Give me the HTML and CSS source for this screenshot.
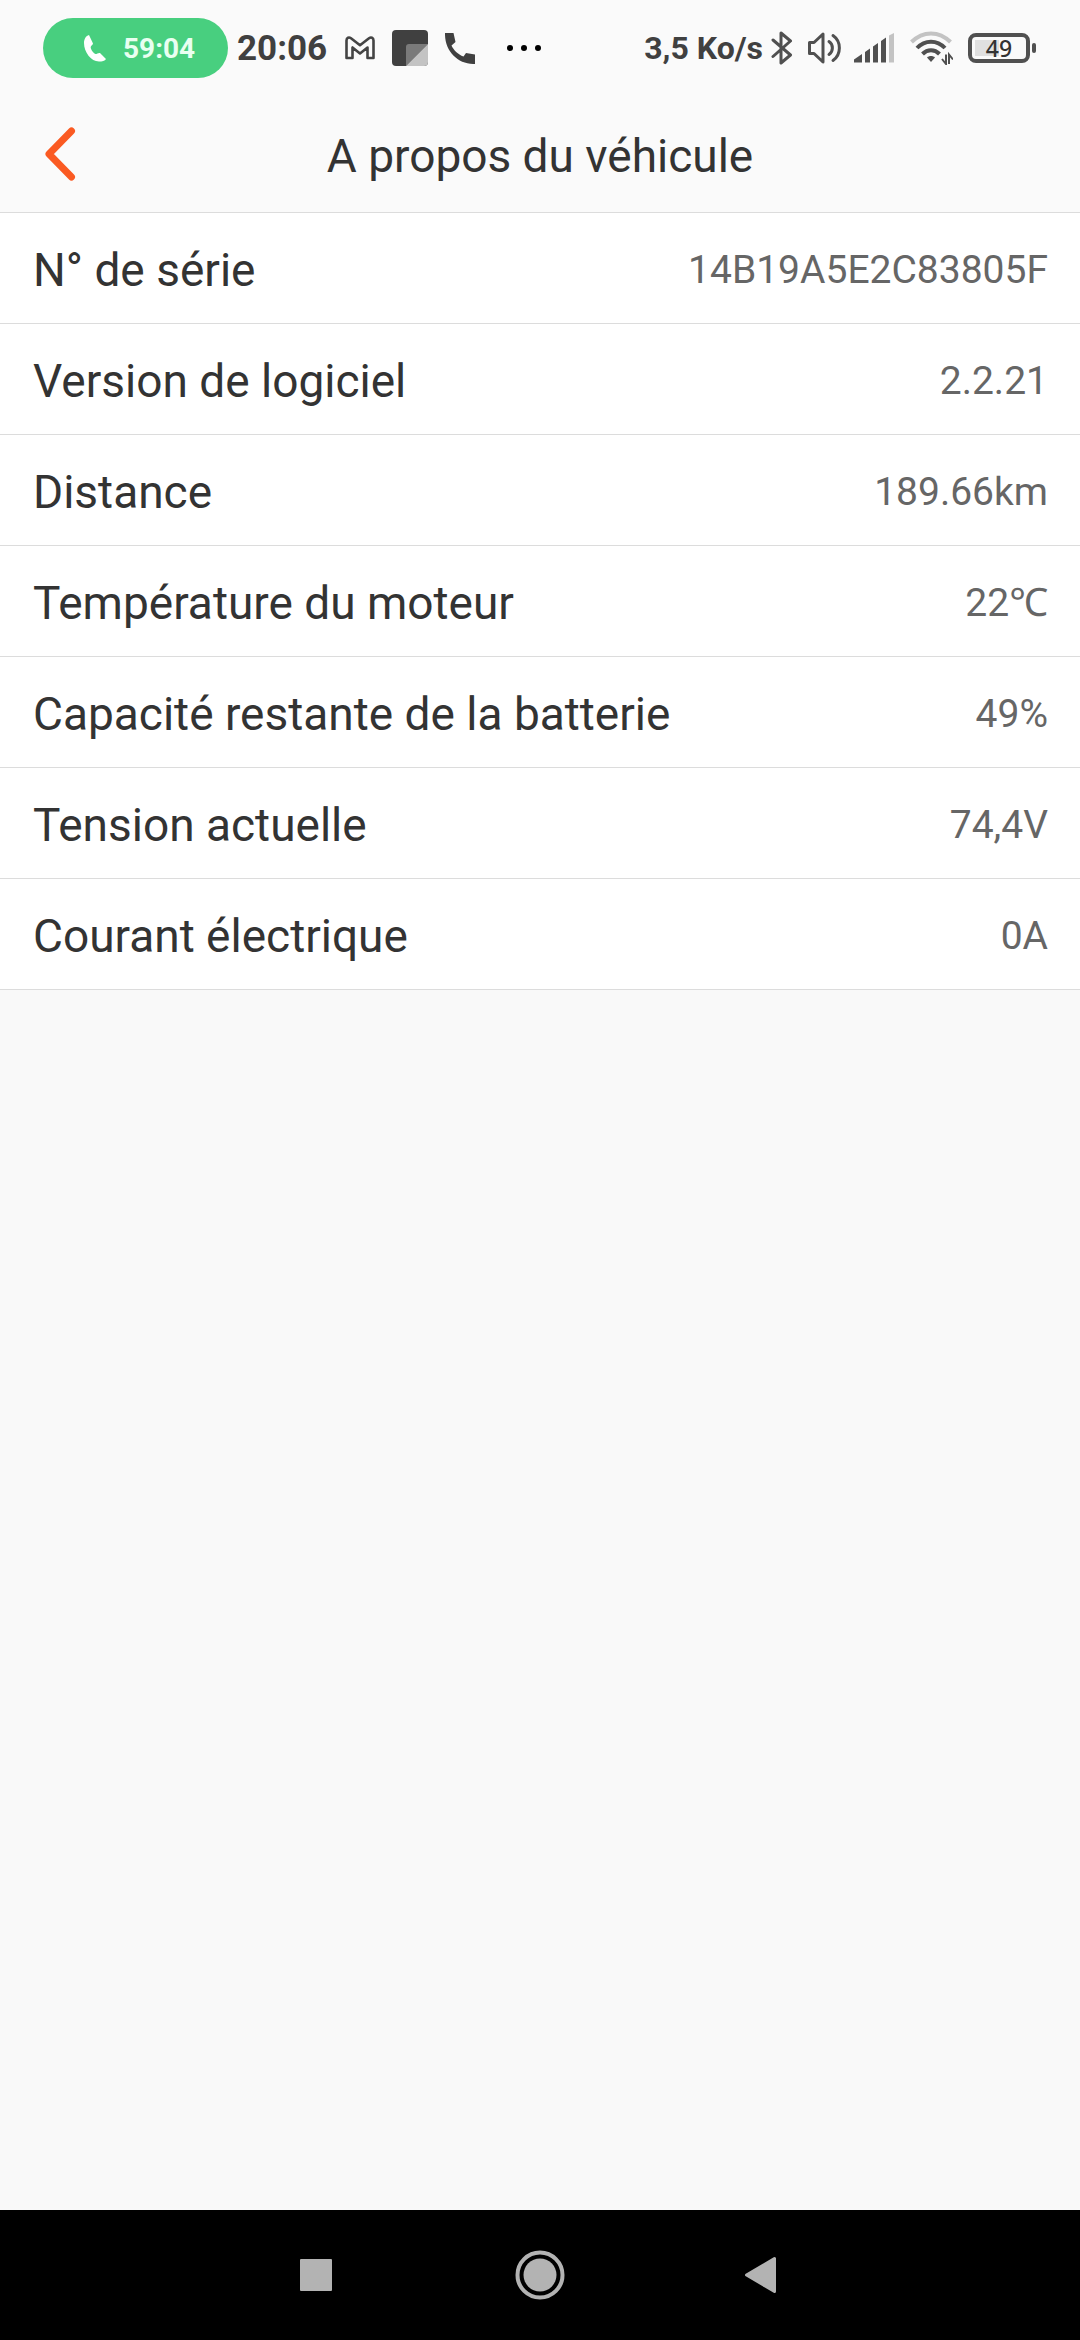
FILE: index.html
```html
<!DOCTYPE html>
<html lang="fr">
<head>
<meta charset="utf-8">
<meta name="viewport" content="width=device-width, initial-scale=1">
<title>A propos du véhicule</title>
<link rel="stylesheet" href="styles.css">
</head>
<body>
<div class="status">
  <div class="status-left">
    <div class="call">
      <svg width="22" height="27" viewBox="0 0 22 27" aria-hidden="true"><path fill="#fff" d="M5 0C2 .8 0 4 0 8c0 9 7 18.500 15 18.500 3 0 6-.5 7-2.500l-6-6c-1.500-.5-3 1-4.500 1C9 18 6.500 14 6.700 12 6.700 10.800 9 10 9 8.500z"/></svg>
      <span>59:04</span>
    </div>
    <span class="clock">20:06</span>
    <div class="notifications">
      <svg width="30" height="24" viewBox="0 0 30 24" aria-hidden="true"><path fill="none" stroke="#444" stroke-width="2.600" stroke-linejoin="round" d="M1.500 4.500C1.500 1.500 4 .8 6 2.200l9 7 9-7c2-1.400 4.500-.7 4.500 2.300V22H22.500V11.500L15 17.500 7.500 11.500V22h-6z"/></svg>
      <svg width="36" height="36" viewBox="0 0 36 36" aria-hidden="true"><rect width="36" height="36" rx="4" fill="#404040"/><path fill="#7a7a7a" d="M14 36V17a3 3 0 0 1 3-3h19z"/><path fill="#c3c3c3" d="M14 36 36 14v18a4 4 0 0 1-4 4z"/></svg>
      <svg width="30" height="31" viewBox="0 0 30 31" aria-hidden="true"><path fill="#404040" d="M0 0h8.500L10.500 9 6.500 12.500C8.500 17 13 21.500 18.500 23.500L21 20l9 1.500V31C13 31.500-.5 18 0 0z"/></svg>
    </div>
    <svg class="more" width="34" height="6" viewBox="0 0 34 6" aria-hidden="true"><circle cx="3" cy="3" r="3"/><circle cx="17" cy="3" r="3"/><circle cx="31" cy="3" r="3"/></svg>
  </div>
  <div class="status-right">
    <span class="speed">3,5 Ko/s</span>
    <svg class="bluetooth" width="22" height="34" viewBox="0 0 22 34" aria-hidden="true"><path fill="none" stroke="#505050" stroke-width="3" stroke-linejoin="round" stroke-linecap="round" d="M2 9 19.500 24 10 32V2l9.500 8L2 25.500"/></svg>
    <svg class="sound" width="33" height="32" viewBox="0 0 33 32" aria-hidden="true"><g fill="none" stroke="#505050" stroke-width="3" stroke-linejoin="round" stroke-linecap="round"><path d="M1.500 10.500h4.500L15 2v28L6 21.500H1.500z"/><path d="M21 9.500c4.500 3 4.500 10 0 13M25 3.500c8.500 6 8.500 19 0 25"/></g></svg>
    <svg class="signal" width="40" height="30" viewBox="0 0 40 30" aria-hidden="true"><path fill="#505050" d="M0 29.500V26.500L8 21v8.500zM11 29.500V19l5-3.500v14zM19 29.500v-16l5-3.500v19.500zM27 29.500V8l5-3.500v25z"/><path fill="#c3c3c3" d="M35 29.500V2.500L40 0v29.500z"/></svg>
    <svg class="wifi" width="43" height="34" viewBox="0 0 43 34" aria-hidden="true"><g fill="none" stroke-width="4"><path stroke="#c3c3c3" d="M1.500 11C13-.5 29-.5 40.500 11"/><path stroke="#505050" d="M7 17c8-8.500 20-8.500 28 0M12.500 23c5-5 12-5 17 0"/></g><path fill="#505050" d="M17 26.500c2-2 6-2 8 0L21 31z"/><path fill="none" stroke="#505050" stroke-width="2" d="M36 23.500V33l-4-5M39 33V23.500l4 5"/></svg>
    <div class="battery"><span>49</span><i></i></div>
  </div>
</div>
<header class="header">
  <button class="back" aria-label="Retour"><svg width="32" height="56" viewBox="0 0 32 56"><path fill="none" stroke="#fa5a22" stroke-width="7" stroke-linecap="round" stroke-linejoin="round" d="M27.500 5 5 28 27.500 51"/></svg></button>
  <h1>A propos du véhicule</h1>
</header>
<main class="content">
  <dl class="list">
    <div class="row"><dt>N° de série</dt><dd>14B19A5E2C83805F</dd></div>
    <div class="row"><dt>Version de logiciel</dt><dd>2.2.21</dd></div>
    <div class="row"><dt>Distance</dt><dd>189.66km</dd></div>
    <div class="row"><dt>Température du moteur</dt><dd>22℃</dd></div>
    <div class="row"><dt>Capacité restante de la batterie</dt><dd>49%</dd></div>
    <div class="row"><dt>Tension actuelle</dt><dd>74,4V</dd></div>
    <div class="row"><dt>Courant électrique</dt><dd>0A</dd></div>
  </dl>
</main>
<nav class="nav">
  <button aria-label="Applications récentes"><svg width="50" height="50" viewBox="0 0 50 50"><rect x="9" y="9" width="32" height="32" rx="1" fill="#b3b3b3"/></svg></button>
  <button aria-label="Accueil"><svg width="50" height="50" viewBox="0 0 50 50"><circle cx="25" cy="25" r="22.500" fill="none" stroke="#b3b3b3" stroke-width="4"/><circle cx="25" cy="25" r="16.500" fill="#b3b3b3"/></svg></button>
  <button aria-label="Précédent"><svg width="50" height="50" viewBox="0 0 50 50"><path d="M7.500 25 35.500 8.500v33z" fill="#b3b3b3" stroke="#b3b3b3" stroke-width="3" stroke-linejoin="round"/></svg></button>
</nav>
</body>
</html>
```
FILE: styles.css
```css
* {
  box-sizing: border-box;
}

body {
  margin: 0;
  min-height: 100vh;
  display: flex;
  flex-direction: column;
  background: #f9f9f9;
  color: #333;
  font-family: Roboto, "Liberation Sans", "Noto Sans", sans-serif;
}

svg {
  display: block;
  flex: none;
}

button {
  border: 0;
  padding: 0;
  background: none;
}

.status {
  display: flex;
  justify-content: space-between;
  height: 96px;
  padding: 0 44px 0 43px;
  background: #fafafa;
  color: #404040;
  font-weight: 700;
  white-space: nowrap;
}

.status-left,
.status-right,
.notifications,
.call {
  display: flex;
  align-items: center;
}

.call {
  width: 185px;
  height: 60px;
  padding-left: 41px;
  gap: 17px;
  border-radius: 30px;
  background: #48cf7f;
  color: #e9fff1;
  font-size: 28px;
}

.clock {
  width: 107px;
  padding-left: 9px;
  font-size: 35px;
}

.notifications {
  gap: 17px;
  padding-left: 10px;
}

.more {
  margin-left: 32px;
}

.speed {
  font-size: 32px;
}

.bluetooth {
  margin-left: 8px;
}

.sound {
  margin-left: 15px;
}

.signal {
  margin-left: 13px;
}

.wifi {
  margin-left: 16px;
}

.battery {
  display: flex;
  align-items: center;
  gap: 2px;
  margin-left: 15px;
  color: #333;
  font: 500 23px/22px "Noto Sans", sans-serif;
}

.battery span {
  width: 62px;
  height: 30px;
  border: 4px solid #505050;
  border-radius: 8px;
  background: linear-gradient(#e0e0e0, #e0e0e0) 3px 3px / 24px 16px no-repeat;
  text-align: center;
}

.battery i {
  width: 4px;
  height: 10px;
  border-radius: 2px;
  background: #505050;
}

.header {
  display: grid;
  grid-template-columns: 108px 1fr 108px;
  align-items: center;
  height: 117px;
  border-bottom: 1px solid #dcdcdc;
  background: #fafafa;
}

.back {
  padding-left: 44px;
}

h1 {
  margin: 0;
  padding-top: 4px;
  font-size: 46px;
  font-weight: 400;
  text-align: center;
}

.content {
  flex: 1;
}

.list {
  margin: 0;
  background: #fff;
}

.row {
  display: flex;
  justify-content: space-between;
  align-items: center;
  height: 111px;
  padding: 4px 32px 0 33px;
  border-bottom: 1px solid #dcdcdc;
  line-height: 54px;
}

dt {
  font-size: 46px;
}

dd {
  margin: 0;
  color: #666;
  font-size: 39px;
}

.nav {
  display: grid;
  grid-template-columns: repeat(3, 224px);
  justify-content: center;
  height: 130px;
  background: #000;
}

.nav button {
  display: flex;
  align-items: center;
  justify-content: center;
}
```
